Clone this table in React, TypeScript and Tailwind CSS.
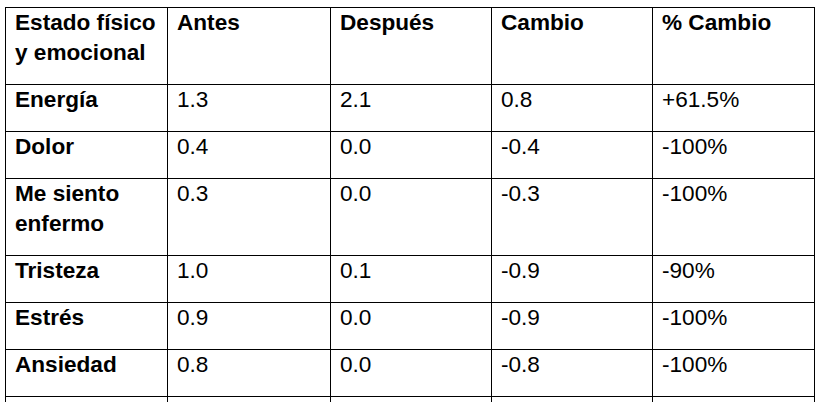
import React from "react";

const rows: [string, string, string, string, string][] = [
  ["Energía", "1.3", "2.1", "0.8", "+61.5%"],
  ["Dolor", "0.4", "0.0", "-0.4", "-100%"],
  ["Me siento enfermo", "0.3", "0.0", "-0.3", "-100%"],
  ["Tristeza", "1.0", "0.1", "-0.9", "-90%"],
  ["Estrés", "0.9", "0.0", "-0.9", "-100%"],
  ["Ansiedad", "0.8", "0.0", "-0.8", "-100%"],
];

const cell = "border border-black align-top pl-[9px] pr-[6px] pt-0 pb-[16px]";

export default function App() {
  return (
    <div
      className="bg-white w-[821px] h-[402px] overflow-hidden pl-[5px] pt-[7px] text-black text-[22.6px] leading-[30px]"
      style={{ fontFamily: '"Liberation Sans", Arial, sans-serif' }}
    >
      <table className="table-fixed border-collapse w-[809px]">
        <colgroup>
          <col className="w-[162px]" />
          <col className="w-[163px]" />
          <col className="w-[161px]" />
          <col className="w-[161px]" />
          <col className="w-[162px]" />
        </colgroup>
        <thead>
          <tr>
            <th className={`${cell} text-left font-bold`}>
              Estado físico
              <br />y emocional
            </th>
            <th className={`${cell} text-left font-bold`}>Antes</th>
            <th className={`${cell} text-left font-bold`}>Después</th>
            <th className={`${cell} text-left font-bold`}>Cambio</th>
            <th className={`${cell} text-left font-bold`}>% Cambio</th>
          </tr>
        </thead>
        <tbody>
          {rows.map((r) => (
            <tr key={r[0]}>
              <td className={`${cell} font-bold`}>
                {r[0] === "Me siento enfermo" ? (
                  <>
                    Me siento
                    <br />
                    enfermo
                  </>
                ) : (
                  r[0]
                )}
              </td>
              <td className={cell}>{r[1]}</td>
              <td className={cell}>{r[2]}</td>
              <td className={cell}>{r[3]}</td>
              <td className={cell}>{r[4]}</td>
            </tr>
          ))}
          <tr>
            <td className={`${cell} font-bold`}>&nbsp;</td>
            <td className={cell}>&nbsp;</td>
            <td className={cell}>&nbsp;</td>
            <td className={cell}>&nbsp;</td>
            <td className={cell}>&nbsp;</td>
          </tr>
        </tbody>
      </table>
    </div>
  );
}
